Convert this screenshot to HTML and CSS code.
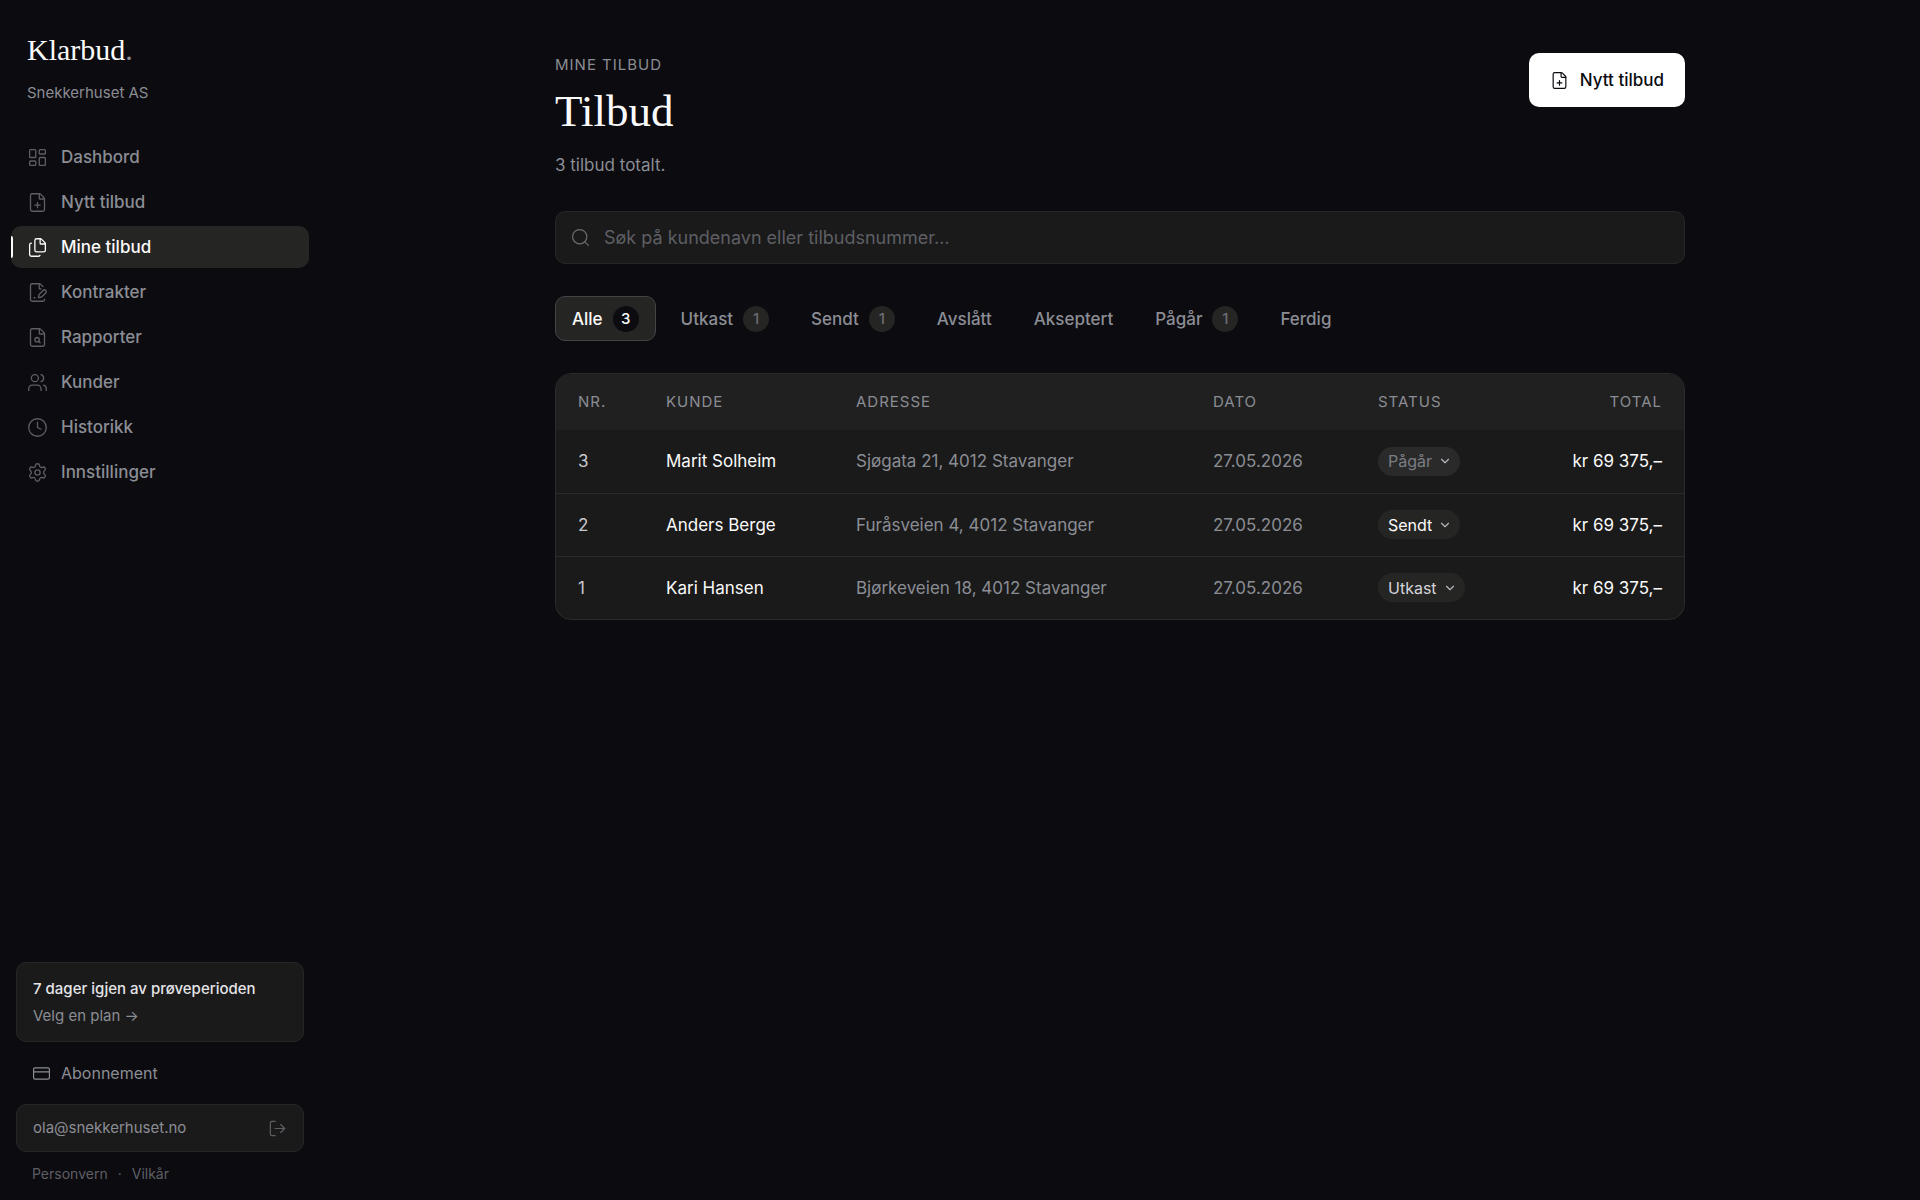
FILE: index.html
```html
<!DOCTYPE html>
<html lang="nb">
<head>
    <meta charset="UTF-8">
    <meta name="viewport" content="width=device-width, initial-scale=1.0">
    <title>Tilbud - Klarbud</title>
    <link rel="stylesheet" href="styles.css">
</head>
<body>
    <!-- Shared icon shapes -->
    <svg class="sprite" aria-hidden="true">
        <symbol id="file-plus" viewBox="0 0 24 24">
            <path d="M6 22a2 2 0 0 1-2-2V4a2 2 0 0 1 2-2h8a2.4 2.4 0 0 1 1.704.706l3.588 3.588A2.4 2.4 0 0 1 20 8v12a2 2 0 0 1-2 2z"/>
            <path d="M14 2v5a1 1 0 0 0 1 1h5M9 15h6M12 18v-6"/>
        </symbol>
    </svg>

    <div class="layout">
        <aside class="sidebar">
            <div class="brand">
                <a href="#" class="logo">Klarbud<span>.</span></a>
                <p class="company">Snekkerhuset AS</p>
            </div>

            <nav class="nav">
                <a href="#">
                    <svg class="icon" viewBox="0 0 24 24"><rect x="3" y="3" width="7" height="9" rx="1"/><rect x="14" y="3" width="7" height="5" rx="1"/><rect x="14" y="12" width="7" height="9" rx="1"/><rect x="3" y="16" width="7" height="5" rx="1"/></svg>
                    Dashbord
                </a>
                <a href="#">
                    <svg class="icon"><use href="#file-plus"/></svg>
                    Nytt tilbud
                </a>
                <a href="#" class="active" aria-current="page">
                    <svg class="icon" viewBox="0 0 24 24"><path d="M15 2h-4a2 2 0 0 0-2 2v11a2 2 0 0 0 2 2h8a2 2 0 0 0 2-2V8"/><path d="M16.706 2.706A2.4 2.4 0 0 0 15 2v5a1 1 0 0 0 1 1h5a2.4 2.4 0 0 0-.706-1.706z"/><path d="M5 7a2 2 0 0 0-2 2v11a2 2 0 0 0 2 2h8a2 2 0 0 0 1.732-1"/></svg>
                    Mine tilbud
                </a>
                <a href="#">
                    <svg class="icon" viewBox="0 0 24 24"><path d="m18.226 5.226-2.52-2.52A2.4 2.4 0 0 0 14 2H6a2 2 0 0 0-2 2v16a2 2 0 0 0 2 2h12a2 2 0 0 0 2-2v-.351"/><path d="M14 2v5a1 1 0 0 0 1 1h1"/><path d="M21.378 12.626a1 1 0 0 0-3.004-3.004l-4.01 4.012a2 2 0 0 0-.506.854l-.837 2.87a.5.5 0 0 0 .62.62l2.87-.837a2 2 0 0 0 .854-.506z"/><path d="M8 18h1"/></svg>
                    Kontrakter
                </a>
                <a href="#">
                    <svg class="icon" viewBox="0 0 24 24"><path d="M6 22a2 2 0 0 1-2-2V4a2 2 0 0 1 2-2h8a2.4 2.4 0 0 1 1.704.706l3.588 3.588A2.4 2.4 0 0 1 20 8v12a2 2 0 0 1-2 2z"/><path d="M14 2v5a1 1 0 0 0 1 1h5"/><circle cx="11.5" cy="14.5" r="2.5"/><path d="M13.3 16.3 15 18"/></svg>
                    Rapporter
                </a>
                <a href="#">
                    <svg class="icon" viewBox="0 0 24 24"><path d="M16 21v-2a4 4 0 0 0-4-4H6a4 4 0 0 0-4 4v2"/><path d="M16 3.128a4 4 0 0 1 0 7.744"/><path d="M22 21v-2a4 4 0 0 0-3-3.87"/><circle cx="9" cy="7" r="4"/></svg>
                    Kunder
                </a>
                <a href="#">
                    <svg class="icon" viewBox="0 0 24 24"><circle cx="12" cy="12" r="10"/><path d="M12 6v6l4 2"/></svg>
                    Historikk
                </a>
                <a href="#">
                    <svg class="icon" viewBox="0 0 24 24"><path d="M9.671 4.136a2.34 2.34 0 0 1 4.659 0 2.34 2.34 0 0 0 3.319 1.915 2.34 2.34 0 0 1 2.33 4.033 2.34 2.34 0 0 0 0 3.831 2.34 2.34 0 0 1-2.33 4.033 2.34 2.34 0 0 0-3.319 1.915 2.34 2.34 0 0 1-4.659 0 2.34 2.34 0 0 0-3.32-1.915 2.34 2.34 0 0 1-2.33-4.033 2.34 2.34 0 0 0 0-3.831A2.34 2.34 0 0 1 6.35 6.051a2.34 2.34 0 0 0 3.319-1.915"/><circle cx="12" cy="12" r="3"/></svg>
                    Innstillinger
                </a>
            </nav>

            <div class="sidebar-bottom">
                <a href="#" class="trial">
                    <strong>7 dager igjen av prøveperioden</strong>
                    <span>Velg en plan →</span>
                </a>
                <a href="#" class="subscription">
                    <svg class="icon icon-md" viewBox="0 0 24 24"><rect x="2" y="5" width="20" height="14" rx="2"/><path d="M2 10h20"/></svg>
                    Abonnement
                </a>
                <div class="account">
                    <span>ola@snekkerhuset.no</span>
                    <button type="button" aria-label="Logg ut">
                        <svg class="icon icon-md" viewBox="0 0 24 24"><path d="m16 17 5-5-5-5"/><path d="M21 12H9"/><path d="M9 21H5a2 2 0 0 1-2-2V5a2 2 0 0 1 2-2h4"/></svg>
                    </button>
                </div>
                <div class="legal">
                    <a href="#">Personvern</a>
                    <span>·</span>
                    <a href="#">Vilkår</a>
                </div>
            </div>
        </aside>

        <main class="main">
            <div class="content">
                <header class="page-header">
                    <div>
                        <p class="eyebrow">MINE TILBUD</p>
                        <h1>Tilbud</h1>
                        <p class="summary">3 tilbud totalt.</p>
                    </div>
                    <button type="button" class="btn-primary">
                        <svg class="icon icon-md"><use href="#file-plus"/></svg>
                        Nytt tilbud
                    </button>
                </header>

                <label class="search">
                    <svg class="icon icon-md" viewBox="0 0 24 24"><circle cx="11" cy="11" r="9"/><path d="m22 22-4.5-4.5"/></svg>
                    <input type="search" aria-label="Søk i tilbud" placeholder="Søk på kundenavn eller tilbudsnummer…">
                </label>

                <div class="tabs">
                    <button type="button" class="active">Alle <span class="count">3</span></button>
                    <button type="button">Utkast <span class="count">1</span></button>
                    <button type="button">Sendt <span class="count">1</span></button>
                    <button type="button">Avslått</button>
                    <button type="button">Akseptert</button>
                    <button type="button">Pågår <span class="count">1</span></button>
                    <button type="button">Ferdig</button>
                </div>

                <div class="table-card">
                    <table>
                        <thead>
                            <tr>
                                <th class="col-nr">NR.</th>
                                <th class="col-customer">KUNDE</th>
                                <th>ADRESSE</th>
                                <th class="col-date">DATO</th>
                                <th class="col-status">STATUS</th>
                                <th class="col-total">TOTAL</th>
                            </tr>
                        </thead>
                        <tbody>
                            <tr>
                                <td class="nr">3</td>
                                <td class="customer">Marit Solheim</td>
                                <td>Sjøgata 21, 4012 Stavanger</td>
                                <td>27.05.2026</td>
                                <td>
                                    <select class="status ongoing" aria-label="Status for tilbud 3">
                                        <option>Utkast</option>
                                        <option>Sendt</option>
                                        <option selected>Pågår</option>
                                    </select>
                                </td>
                                <td class="total">kr 69 375,–</td>
                            </tr>
                            <tr>
                                <td class="nr">2</td>
                                <td class="customer">Anders Berge</td>
                                <td>Furåsveien 4, 4012 Stavanger</td>
                                <td>27.05.2026</td>
                                <td>
                                    <select class="status sent" aria-label="Status for tilbud 2">
                                        <option>Utkast</option>
                                        <option selected>Sendt</option>
                                        <option>Pågår</option>
                                    </select>
                                </td>
                                <td class="total">kr 69 375,–</td>
                            </tr>
                            <tr>
                                <td class="nr">1</td>
                                <td class="customer">Kari Hansen</td>
                                <td>Bjørkeveien 18, 4012 Stavanger</td>
                                <td>27.05.2026</td>
                                <td>
                                    <select class="status" aria-label="Status for tilbud 1">
                                        <option selected>Utkast</option>
                                        <option>Sendt</option>
                                        <option>Pågår</option>
                                    </select>
                                </td>
                                <td class="total">kr 69 375,–</td>
                            </tr>
                        </tbody>
                    </table>
                </div>
            </div>
        </main>
    </div>
</body>
</html>
```

FILE: styles.css
```css
* {
    box-sizing: border-box;
}

body {
    margin: 0;
    background-color: #0b0b10;
    color: #8b8d94;
    font-family: "Inter", "Liberation Sans", sans-serif;
    font-size: 17px;
    line-height: 24px;
}

h1, p {
    margin: 0;
}

a {
    color: inherit;
    text-decoration: none;
}

button, input, select {
    font: inherit;
    color: inherit;
}

button {
    border: none;
    background: none;
    cursor: pointer;
}

.sprite {
    display: none;
}

.icon {
    width: 21px;
    height: 21px;
    flex-shrink: 0;
    fill: none;
    stroke: currentColor;
    stroke-width: 1.5;
    stroke-linecap: round;
    stroke-linejoin: round;
}

.icon-md {
    width: 19px;
    height: 19px;
}

.layout {
    display: flex;
    min-height: 100vh;
}

/* Sidebar */
.sidebar {
    display: flex;
    flex-direction: column;
    width: 320px;
    flex-shrink: 0;
}

.brand {
    padding: 32px 27px 0;
}

.logo {
    display: block;
    color: #fafafa;
    font-family: "Liberation Serif", serif;
    font-size: 30px;
    line-height: 36px;
}

.logo span {
    color: #8b8d94;
}

.company {
    margin-top: 13px;
    font-size: 15px;
}

.nav {
    display: flex;
    flex-direction: column;
    gap: 3px;
    margin-top: 31px;
    padding: 0 11px;
}

.nav a {
    position: relative;
    display: flex;
    align-items: center;
    gap: 13px;
    height: 42px;
    padding: 0 16px;
    border-radius: 10px;
    font-weight: 500;
}

.nav .icon {
    color: #5e5f64;
}

.nav .active {
    background-color: #252523;
    color: #fafafa;
}

.nav .active .icon {
    color: #fafafa;
}

.nav .active::before {
    content: "";
    position: absolute;
    left: 0;
    top: 10px;
    width: 2px;
    height: 22px;
    border-radius: 0 2px 2px 0;
    background-color: #fafafa;
}

.sidebar-bottom {
    margin-top: auto;
    padding: 0 16px 14px;
    font-size: 15px;
}

.trial {
    display: block;
    padding: 12px 16px;
    border: 1px solid #262626;
    border-radius: 10px;
    background-color: #1a1a1a;
}

.trial strong, .trial span {
    display: block;
    line-height: 27px;
}

.trial strong {
    color: #e4e4e8;
    font-weight: 500;
    white-space: nowrap;
}

.subscription {
    display: flex;
    align-items: center;
    gap: 10px;
    height: 42px;
    margin: 10px 0;
    padding: 0 16px;
    font-size: 16px;
}

.account {
    display: flex;
    align-items: center;
    justify-content: space-between;
    height: 48px;
    padding: 0 16px;
    border: 1px solid #262626;
    border-radius: 10px;
    background-color: #1a1a1a;
}

.account button {
    display: flex;
    padding: 0;
    color: #5e5f64;
}

.legal {
    display: flex;
    gap: 10px;
    margin-top: 10px;
    padding: 0 16px;
    color: #5e5f64;
    font-size: 14px;
}

/* Main */
.main {
    flex: 1;
    padding: 53px 48px;
}

.content {
    max-width: 1130px;
    margin: 0 auto;
}

.page-header {
    display: flex;
    align-items: flex-start;
    justify-content: space-between;
}

.eyebrow {
    font-size: 15px;
    letter-spacing: 1px;
}

h1 {
    margin-top: 10px;
    color: #fafafa;
    font-family: "Liberation Serif", serif;
    font-size: 45px;
    font-weight: 400;
    line-height: 48px;
}

.summary {
    margin-top: 18px;
}

.btn-primary {
    display: flex;
    align-items: center;
    gap: 11px;
    height: 54px;
    padding: 0 21px;
    border-radius: 10px;
    background-color: #fff;
    color: #0b0b10;
    font-weight: 500;
}

.search {
    display: flex;
    align-items: center;
    gap: 14px;
    height: 53px;
    margin-top: 34px;
    padding: 0 15px;
    border: 1px solid #262626;
    border-radius: 10px;
    background-color: #1a1a1a;
    color: #6b6c72;
}

.search input {
    flex: 1;
    padding: 0;
    border: none;
    outline: none;
    background: none;
    color: #fafafa;
    font-size: 18px;
}

.search input::placeholder {
    color: #5e5f64;
}

.tabs {
    display: flex;
    gap: 8px;
    margin-top: 32px;
}

.tabs button {
    display: flex;
    align-items: center;
    gap: 10px;
    height: 45px;
    padding: 0 16px;
    border: 1px solid transparent;
    border-radius: 10px;
    font-weight: 500;
}

.tabs .active {
    border-color: #444448;
    background-color: #252523;
    color: #fafafa;
}

.count {
    min-width: 26px;
    border-radius: 13px;
    background-color: #252523;
    color: #6b6c72;
    font-size: 15px;
    line-height: 26px;
    text-align: center;
}

.tabs .active .count {
    background-color: #0b0b10;
    color: #fafafa;
}

/* Table */
.table-card {
    margin-top: 32px;
    overflow: hidden;
    border: 1px solid #2a2a2a;
    border-radius: 16px;
    background-color: #1a1a1a;
}

table {
    width: 100%;
    border-collapse: collapse;
    table-layout: fixed;
}

th, td {
    padding: 0 22px;
    text-align: left;
}

th {
    height: 56px;
    background-color: #202020;
    font-size: 15px;
    font-weight: 400;
    letter-spacing: 1px;
}

td {
    height: 63px;
    white-space: nowrap;
}

tr + tr td {
    border-top: 1px solid #2a2a2a;
}

.col-nr {
    width: 88px;
}

.col-customer {
    width: 190px;
}

.col-date {
    width: 165px;
}

.col-status {
    width: 140px;
}

.col-total {
    width: 188px;
}

.col-total, .total {
    text-align: right;
}

.nr {
    color: #c8c9d0;
}

.customer, .total {
    color: #fafafa;
}

.status {
    field-sizing: content;
    appearance: none;
    display: block;
    height: 29px;
    padding: 0 28px 0 10px;
    border: none;
    border-radius: 15px;
    background: #252523 url("data:image/svg+xml,%3Csvg xmlns='http://www.w3.org/2000/svg' viewBox='0 0 24 24' fill='none' stroke='%23b4b5bc' stroke-width='2' stroke-linecap='round' stroke-linejoin='round'%3E%3Cpath d='m6 9 6 6 6-6'/%3E%3C/svg%3E") no-repeat right 8px center / 14px;
    color: #d4d4da;
    font-size: 16px;
    cursor: pointer;
}

.status.sent {
    color: #fafafa;
}

.status.ongoing {
    background-color: #2a2a2a;
    color: #7b7d84;
}
```
